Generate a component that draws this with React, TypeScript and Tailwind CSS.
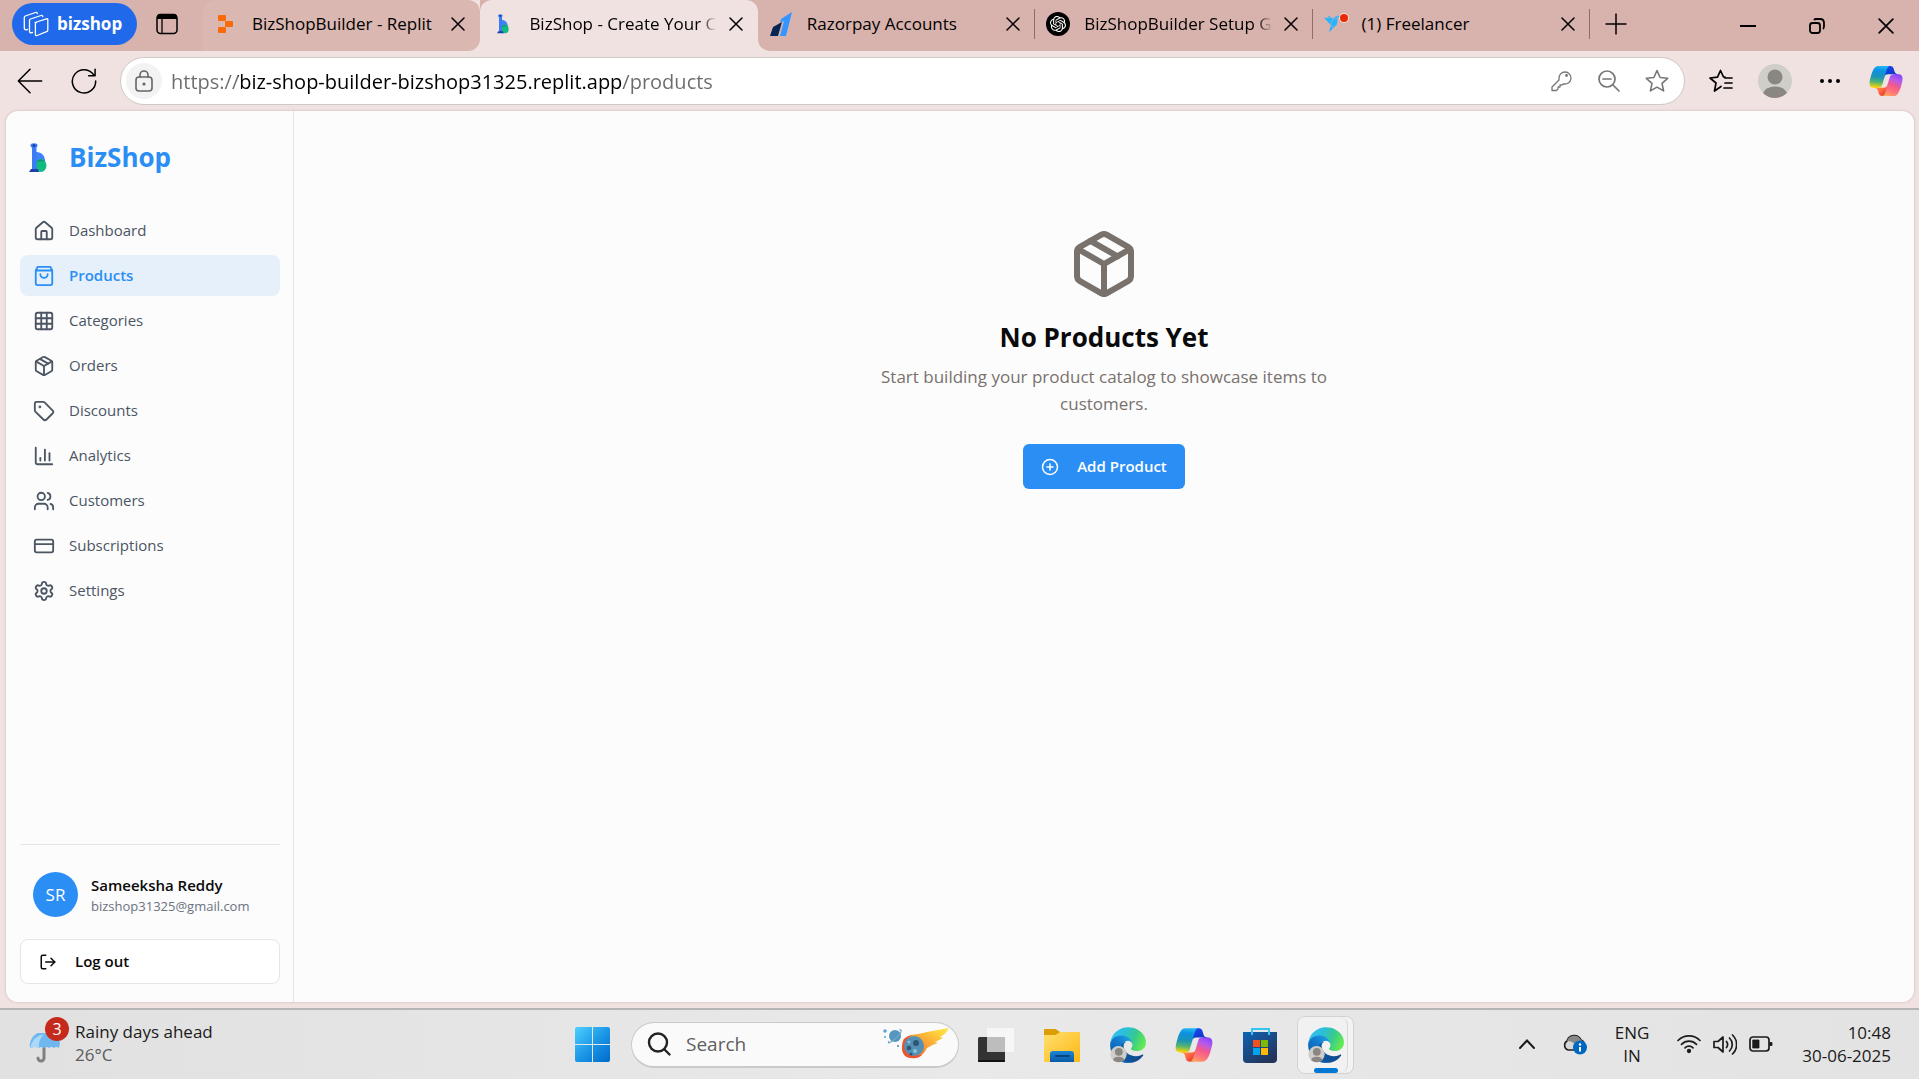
import { useId, useState } from "react";
import type { ReactNode } from "react";
import {
  ChartColumn,
  CirclePlus,
  CreditCard,
  Grid3x3,
  House,
  LogOut,
  Package,
  Settings,
  ShoppingBag,
  Tag,
  Users,
} from "lucide-react";
import { SiFreelancer, SiOpenai } from "react-icons/si";

/* ---------- Brand drawings ---------- */

function CopilotLogo({ className }: { className: string }) {
  const id = useId();
  return (
    <svg viewBox="0 0 48 48" className={className} aria-hidden="true">
      <defs>
        <linearGradient id={id + "a"} x1="0.2" y1="0" x2="0.7" y2="1">
          <stop offset="0" stopColor="#1b48ef" />
          <stop offset="1" stopColor="#0a2fb8" />
        </linearGradient>
        <linearGradient id={id + "b"} x1="0" y1="0" x2="1" y2="1">
          <stop offset="0" stopColor="#ffb657" />
          <stop offset="0.6" stopColor="#ff5f3d" />
          <stop offset="1" stopColor="#c02b3c" />
        </linearGradient>
        <linearGradient id={id + "c"} x1="0.5" y1="0" x2="0.4" y2="1">
          <stop offset="0" stopColor="#1fb6f4" />
          <stop offset="0.2" stopColor="#0d91e1" />
          <stop offset="0.5" stopColor="#1a93b8" />
          <stop offset="0.75" stopColor="#52b471" />
          <stop offset="1" stopColor="#ffd602" />
        </linearGradient>
        <linearGradient id={id + "d"} x1="0.7" y1="0" x2="0.3" y2="1">
          <stop offset="0" stopColor="#8c48ff" />
          <stop offset="0.25" stopColor="#b95be8" />
          <stop offset="0.5" stopColor="#f2598a" />
          <stop offset="0.8" stopColor="#ff7a78" />
          <stop offset="1" stopColor="#ffa45c" />
        </linearGradient>
      </defs>
      <path fill={`url(#${id}a)`} d="M34.14 7.33A4.63 4.63 0 0 0 29.7 4h-1.35a4.63 4.63 0 0 0-4.55 3.8l-2.32 12.6.58-1.96a4.63 4.63 0 0 1 4.44-3.33h7.85l3.3 1.28 3.17-1.28h-.93a4.63 4.63 0 0 1-4.44-3.33l-1.31-4.45Z" />
      <path fill={`url(#${id}b)`} d="M14.33 40.66A4.63 4.63 0 0 0 18.78 44h2.87a4.63 4.63 0 0 0 4.63-4.51l.31-12.16-.65 2.23a4.63 4.63 0 0 1-4.45 3.33h-7.92l-2.82-1.53-3.06 1.53h.91a4.63 4.63 0 0 1 4.45 3.34l1.28 4.43Z" />
      <path fill={`url(#${id}c)`} d="M29.5 4H13.46c-4.58 0-7.33 6.06-9.16 12.11-2.18 7.18-5.02 16.78 3.2 16.78h6.93a4.63 4.63 0 0 0 4.46-3.36c1.1-3.87 3.05-10.67 4.97-17.16.84-2.84 1.54-5.28 2.62-6.8C27.08 4.71 28.09 4 29.5 4Z" />
      <path fill={`url(#${id}d)`} d="M18.5 44h16.04c4.58 0 7.33-6.06 9.16-12.11 2.18-7.18 5.02-16.78-3.2-16.78h-6.93a4.63 4.63 0 0 0-4.46 3.36c-1.1 3.87-3.04 10.67-4.97 17.16-.84 2.84-1.54 5.28-2.62 6.8-.6.86-1.61 1.57-3.02 1.57Z" />
    </svg>
  );
}

function EdgeLogo({ className }: { className: string }) {
  const id = useId();
  return (
    <svg viewBox="4 4 257 256" className={className} aria-hidden="true">
      <defs>
        <linearGradient id={id + "a"} x1="0" y1="0.5" x2="1" y2="0.5">
          <stop offset="0" stopColor="#0c59a4" />
          <stop offset="1" stopColor="#114a8b" />
        </linearGradient>
        <linearGradient id={id + "b"} x1="0.9" y1="0.2" x2="0.3" y2="1">
          <stop offset="0" stopColor="#1b9de2" />
          <stop offset="0.4" stopColor="#1378cd" />
          <stop offset="1" stopColor="#0d5ba8" />
        </linearGradient>
        <linearGradient id={id + "c"} x1="0" y1="0.3" x2="1" y2="0.6">
          <stop offset="0" stopColor="#35c1f1" />
          <stop offset="0.35" stopColor="#2bbfdb" />
          <stop offset="0.65" stopColor="#36c98e" />
          <stop offset="1" stopColor="#66eb4e" />
        </linearGradient>
      </defs>
      <path fill={`url(#${id}a)`} d="M235.68 200.4a93.73 93.73 0 0 1-10.54 4.7 101.87 101.87 0 0 1-35.9 6.46c-47.32 0-88.54-32.55-88.54-74.32a31.48 31.48 0 0 1 16.43-27.2c-42.8 1.8-53.8 46.4-53.8 72.53 0 73.88 68.09 77 82.76 77 7.91 0 19.84-2.3 27-4.56l1.31-.44a128.34 128.34 0 0 0 66.6-48.5 4 4 0 0 0-5.32-5.68z" />
      <path fill={`url(#${id}b)`} d="M110.34 246.34A79.2 79.2 0 0 1 87.6 225a80.72 80.72 0 0 1 29.53-120c3.12-1.47 8.45-4.13 15.54-4a32.35 32.35 0 0 1 25.69 13 31.88 31.88 0 0 1 6.36 18.66c0-.21 24.46-79.6-80-79.6-43.9 0-80 41.66-80 78.21a130.15 130.15 0 0 0 12.11 56 128 128 0 0 0 156.38 67.11 75.55 75.55 0 0 1-62.78-8z" />
      <path fill={`url(#${id}c)`} d="M156.94 153.78c-.81 1.05-3.3 2.5-3.3 5.66 0 2.61 1.7 5.12 4.72 7.23 14.38 10 41.49 8.68 41.56 8.68a59.56 59.56 0 0 0 30.27-8.35 61.38 61.38 0 0 0 30.43-52.88c.26-22.41-8-37.31-11.34-43.91C228.09 28.76 182.35 4.92 132.61 4.92a128 128 0 0 0-128 126.2c.48-36.54 36.8-66.05 80-66.05 3.5 0 23.46.34 42 10.07 16.34 8.58 24.9 18.94 30.85 29.21 6.18 10.67 7.28 24.15 7.28 29.52s-2.74 13.33-7.8 19.91z" />
      <circle cx="65" cy="198" r="58" fill="#cfcdc9" />
      <circle cx="67" cy="181" r="28" fill="#8a8682" />
      <path fill="#8a8682" d="M26 239a41 30 0 0 1 80 0 58 58 0 0 1-80 0z" />
    </svg>
  );
}

function BizShopMark({ className }: { className: string }) {
  return (
    <svg viewBox="0 0 18 30" className={className} aria-hidden="true">
      <path d="M7 9c6 0 9 4 9 9s-3 11-9 11z" fill="#3f83f8" />
      <ellipse cx="12" cy="22.5" rx="5.5" ry="6.5" fill="#12b981" />
      <path d="M7 20c2-4 6-5 9-1-3-1-6-1-9 1z" fill="#0a9a6b" />
      <rect x="3" y="3" width="4.500" height="24" fill="#3b7bf6" />
      <ellipse cx="5" cy="2.500" rx="3.500" ry="2.300" fill="#3b7bf6" />
      <circle cx="5" cy="2.500" r="1.500" fill="#1e40af" />
      <path d="M2 26h7l1 3H0z" fill="#1e40af" />
    </svg>
  );
}

function ReplitMark() {
  return (
    <svg viewBox="0 0 18 20" className="h-[20px] w-[18px]" aria-hidden="true">
      <g fill="#f96a0a">
        <rect x="1" y="1" width="8" height="6" rx="1" />
        <rect x="8" y="7" width="8" height="6" rx="1" />
        <rect x="1" y="13" width="8" height="6" rx="1" />
      </g>
    </svg>
  );
}

function RazorpayMark() {
  return (
    <svg viewBox="0 0 22 24" className="h-6 w-[22px]" aria-hidden="true">
      <path d="M3 15l9-5-4 14H0z" fill="#072654" />
      <path d="M22 0l-6 24h-6l4-15-4 2 1-4z" fill="#3395ff" />
    </svg>
  );
}

function OpenAiMark() {
  return (
    <span className="flex size-6 items-center justify-center rounded-full bg-black text-white">
      <SiOpenai className="size-4" />
    </span>
  );
}

function FreelancerMark() {
  return (
    <span className="relative flex size-6 items-center">
      <SiFreelancer className="size-[22px] shrink-0 text-[#29b2fe]" />
      <span className="absolute top-[2px] right-0 size-2 rounded-full bg-[#eb2806] ring-1 ring-[#f6dcd8]" />
    </span>
  );
}

function WorkspaceMark() {
  return (
    <svg viewBox="0 0 26 26" className="size-[26px]" fill="none" stroke="currentColor" strokeWidth="1.300" strokeLinejoin="round" strokeLinecap="round" aria-hidden="true">
      <path d="M12 11.500l11.500-3.700q1.300-.4 1.300.9V19q0 1.300-1.200 1.700L14 24.500q-1.600.6-1.600-1V13q0-1.100 1-1.500" />
      <path d="M9.500 21.500l-1.500.3q-1.500 0-1.500-1.500V9.500q0-1.100 1-1.500L18 4.500q1.600-.5 1.800 1.200" />
      <path d="M4.500 18.500l-1.500.3Q1.300 18.800 1.300 17V6.500q0-1.100 1-1.500L12.500 1.500q1.600-.5 1.800 1" />
    </svg>
  );
}

/* ---------- Browser line icons ---------- */

function Line({ children, className, width = 1.3 }: { children: ReactNode; className: string; width?: number }) {
  return (
    <svg viewBox="0 0 24 24" className={className} fill="none" stroke="currentColor" strokeWidth={width} strokeLinecap="round" strokeLinejoin="round" aria-hidden="true">
      {children}
    </svg>
  );
}

function CloseGlyph({ className }: { className: string }) {
  return (
    <svg viewBox="0 0 14 14" className={className} stroke="currentColor" strokeWidth="1.500" strokeLinecap="round" aria-hidden="true">
      <path d="M1 1l12 12M13 1L1 13" />
    </svg>
  );
}

/* ---------- Tabs ---------- */

type BrowserTab = { title: string; icon: ReactNode; kind: "soft" | "active" | "next" | "plain"; divider?: boolean; fade?: boolean };

const tabs: BrowserTab[] = [
  { title: "BizShopBuilder - Replit", icon: <ReplitMark />, kind: "soft" },
  { title: "BizShop - Create Your C", icon: <BizShopMark className="h-5 w-3" />, kind: "active", fade: true },
  { title: "Razorpay Accounts", icon: <RazorpayMark />, kind: "next", divider: true },
  { title: "BizShopBuilder Setup G", icon: <OpenAiMark />, kind: "plain", divider: true, fade: true },
  { title: "(1) Freelancer", icon: <FreelancerMark />, kind: "plain", divider: true },
];

const tabStyles = {
  soft: "rounded-t-xl rounded-br-xl bg-[#dbb7b1]",
  active: "rounded-t-xl bg-[#f0e2e1]",
  next: "rounded-bl-xl bg-[#d8b2ac]",
  plain: "bg-[#d8b2ac]",
};

const tabCornerFill = {
  soft: "bg-linear-to-r from-[#d8b2ac] from-50% to-[#f0e2e1] to-50%",
  active: "bg-[#d8b2ac]",
  next: "bg-[#f0e2e1]",
  plain: "bg-[#d8b2ac]",
};

function TabStrip() {
  return (
    <header className="flex h-[51px] shrink-0 items-stretch bg-[#d8b2ac] text-black">
      <div className="flex w-[203px] shrink-0 items-center pl-3">
        <button className="mb-1 flex h-[42px] items-center gap-2 rounded-full bg-[#2169eb] pr-[15px] pl-[11px] text-[17px] font-bold text-white">
          <WorkspaceMark />
          bizshop
        </button>
        <button aria-label="Tab actions" className="mb-1 ml-[19px]">
          <svg viewBox="0 0 22 22" className="size-[22px]" aria-hidden="true">
            <rect x="1" y="1.500" width="20" height="19" rx="3.500" fill="none" stroke="#000" strokeWidth="1.500" />
            <path d="M1 6V4q0-3 3-3h14q3 0 3 3v2z" />
            <path d="M6 6v14" stroke="#000" strokeWidth="1.300" />
          </svg>
        </button>
      </div>
      <nav aria-label="Open tabs" className="grid min-w-0 flex-1 grid-cols-5">
        {tabs.map((tab) => (
          <div key={tab.title} className={`flex min-w-0 ${tabCornerFill[tab.kind]}`}>
            <div className={`flex min-w-0 flex-1 items-center pb-1 pl-[11px] ${tabStyles[tab.kind]}`}>
              <span className="flex w-6 shrink-0 justify-center">{tab.icon}</span>
              <span className={`ml-[14px] text-[17px] whitespace-nowrap ${tab.fade ? "mask-r-from-92%" : ""}`}>{tab.title}</span>
              <button aria-label={`Close ${tab.title}`} className="mr-[14px] ml-auto shrink-0">
                <CloseGlyph className="size-[14px]" />
              </button>
              <span className={tab.divider ? "h-[30px] w-px bg-[#8c6f6b]" : "h-[30px] w-px"} />
            </div>
          </div>
        ))}
      </nav>
      <div className="flex w-[329px] shrink-0 items-center pb-1 pl-[15px]">
        <button aria-label="New tab">
          <svg viewBox="0 0 22 22" className="size-[22px]" stroke="#000" strokeWidth="1.500" aria-hidden="true">
            <path d="M11 .5v21M.5 11h21" />
          </svg>
        </button>
        <div className="ml-auto flex items-center gap-[53px] pt-1 pr-[25px]">
          <button aria-label="Minimize">
            <svg viewBox="0 0 16 16" className="size-4" stroke="#000" strokeWidth="2" aria-hidden="true"><path d="M0 8h16" /></svg>
          </button>
          <button aria-label="Restore">
            <svg viewBox="0 0 16 16" className="size-4" fill="none" stroke="#000" strokeWidth="1.800" aria-hidden="true">
              <rect x="1" y="5" width="10" height="10" rx="2.500" />
              <path d="M5 2q.5-1 2.500-1H11q4 0 4 4v3q0 2-1 3" />
            </svg>
          </button>
          <button aria-label="Close window"><CloseGlyph className="size-4" /></button>
        </div>
      </div>
    </header>
  );
}

function Toolbar() {
  const [url, setUrl] = useState("https://biz-shop-builder-bizshop31325.replit.app/products");
  return (
    <div className="flex h-[60px] shrink-0 items-center pr-[15px] pl-4 text-black">
      <button aria-label="Back">
        <Line className="size-7"><path d="M22 12H2M12 2L2 12l10 10" /></Line>
      </button>
      <button aria-label="Refresh" className="ml-[26px]">
        <Line className="size-7"><path d="M20.500 7A10 10 0 1 0 22 12M21.500 2v5.500H16" /></Line>
      </button>
      <div className="ml-[22px] flex h-12 min-w-0 flex-1 items-center rounded-full border border-[#cfc9c8] bg-white pr-[15px] pl-[5px] text-[#767676]">
        <button aria-label="Site information" className="flex size-9 items-center justify-center rounded-full bg-[#f3f3f3] text-[#666]">
          <Line className="size-6" width={1.6}>
            <rect x="4" y="8" width="16" height="14" rx="3" />
            <path d="M8 8V6a4 4 0 0 1 8 0v2" />
            <circle cx="12" cy="15" r=".8" fill="currentColor" />
          </Line>
        </button>
        <input
          aria-label="Address"
          value={url}
          onChange={(event) => setUrl(event.target.value)}
          className="ml-[9px] h-10 min-w-0 flex-1 bg-[linear-gradient(90deg,#6b6b6b_67px,#000_67px,#000_451px,#6b6b6b_451px)] bg-clip-text text-[20px] text-transparent caret-black outline-none"
        />
        <div className="flex items-center gap-6">
          <button aria-label="Saved passwords">
            <Line className="size-6">
              <path d="M10 9.500a6 6 0 1 1 4.500 5.300L13 16h-2v2H9v2l-1.500 1.500H3V18l7-7z" />
              <circle cx="17.500" cy="6.500" r=".8" fill="currentColor" />
            </Line>
          </button>
          <button aria-label="Zoom">
            <Line className="size-6" width={1.7}><circle cx="10" cy="10" r="8" /><path d="M6 10h8M16 16l6 6" /></Line>
          </button>
          <button aria-label="Add to favorites">
            <Line className="size-6" width={1.6}><path d="M12 1.500l3.100 7 7.600.8-5.700 5.100 1.600 7.500L12 18.100l-6.600 3.800L7 14.400 1.300 9.300l7.600-.8z" /></Line>
          </button>
        </div>
      </div>
      <button aria-label="Favorites" className="ml-6">
        <Line className="size-6" width={1.7}>
          <path d="M12 17.500l-6.500 4.500 1.500-8L1 9l7.500-.8L11.500 1.500l3 6.500H16M16 9h7M16 14h7M15 19h8" />
        </Line>
      </button>
      <button aria-label="Profile" className="ml-[25px]">
        <svg viewBox="0 0 34 34" className="size-[34px]" aria-hidden="true">
          <circle cx="17" cy="17" r="17" fill="#d0cec9" />
          <circle cx="17" cy="13" r="7.500" fill="#8a8682" />
          <path d="M5 29q3-6.500 12-6.500T29 29q-5 5-12 5T5 29z" fill="#8a8682" />
        </svg>
      </button>
      <button aria-label="Settings and more" className="ml-[27px]">
        <svg viewBox="0 0 22 6" className="h-[6px] w-[22px]" aria-hidden="true">
          <circle cx="3" cy="3" r="2" /><circle cx="11" cy="3" r="2" /><circle cx="19" cy="3" r="2" />
        </svg>
      </button>
      <button aria-label="Copilot" className="ml-[27px]"><CopilotLogo className="size-9" /></button>
    </div>
  );
}

/* ---------- BizShop page ---------- */

const navItems = [
  { label: "Dashboard", Icon: House },
  { label: "Products", Icon: ShoppingBag },
  { label: "Categories", Icon: Grid3x3 },
  { label: "Orders", Icon: Package },
  { label: "Discounts", Icon: Tag },
  { label: "Analytics", Icon: ChartColumn },
  { label: "Customers", Icon: Users },
  { label: "Subscriptions", Icon: CreditCard },
  { label: "Settings", Icon: Settings },
];

function BagIcon() {
  return (
    <svg viewBox="0 0 24 24" className="size-[22px]" fill="none" stroke="currentColor" strokeWidth="2" strokeLinecap="round" strokeLinejoin="round" aria-hidden="true">
      <path d="M3 6l2-4h14l2 4v14a2 2 0 0 1-2 2H5a2 2 0 0 1-2-2zM3 6h18M16 10a4 4 0 0 1-8 0" />
    </svg>
  );
}

function Sidebar() {
  return (
    <aside className="flex w-72 shrink-0 flex-col border-r border-[#e5e5e5] pr-[13px] pb-[18px] pl-[14px]">
      <div className="flex h-[99px] items-center pb-[6px] pl-[9px]">
        <BizShopMark className="h-[30px] w-[18px]" />
        <span className="ml-[22px] text-[26px] font-bold text-[#2b8ef5]">BizShop</span>
      </div>
      <nav aria-label="Store" className="flex flex-col gap-1">
        {navItems.map(({ label, Icon }) => {
          const active = label === "Products";
          return (
            <a
              key={label}
              href="#"
              aria-current={active ? "page" : undefined}
              className={`flex h-[41px] items-center gap-[14px] rounded-lg px-[13px] text-[15px] ${active ? "bg-[#e5f0fb] font-semibold text-[#2b8ef5]" : "text-[#4b5563]"}`}
            >
              {active ? <BagIcon /> : <Icon className="size-[22px]" />}
              {label}
            </a>
          );
        })}
      </nav>
      <div className="mt-auto border-t border-[#e5e5e5] pt-[27px]">
        <div className="flex items-center gap-[13px] pl-[13px]">
          <span className="flex size-[45px] items-center justify-center rounded-full bg-[#2b8ef5] text-[17px] text-white">SR</span>
          <div>
            <p className="text-[15px] leading-[22px] font-semibold text-[#0a0a0a]">Sameeksha Reddy</p>
            <p className="text-[13px] leading-5 text-[#6b7280]">bizshop31325@gmail.com</p>
          </div>
        </div>
        <button className="mt-[22px] flex h-[45px] w-full items-center gap-[18px] rounded-lg border border-[#e5e5e5] bg-white px-[18px] text-[15px] font-semibold text-[#0a0a0a]">
          <LogOut className="size-[18px]" />
          Log out
        </button>
      </div>
    </aside>
  );
}

function ProductsPage() {
  return (
    <main className="flex min-w-0 flex-1 flex-col items-center pt-[117px] text-center">
      <Package className="size-[72px] text-[#78716c]" />
      <h1 className="mt-[19px] text-[26px] leading-9 font-bold text-[#0a0a0a]">No Products Yet</h1>
      <p className="mt-2 max-w-[504px] text-[17px] leading-[27px] text-[#78716c]">
        Start building your product catalog to showcase items to customers.
      </p>
      <button className="mt-[27px] flex h-[45px] items-center gap-[18px] rounded-md bg-[#2b8ef5] px-[18px] text-[15px] font-semibold text-white">
        <CirclePlus className="size-[18px]" />
        Add Product
      </button>
    </main>
  );
}

/* ---------- Taskbar ---------- */

function Weather() {
  return (
    <button className="flex items-center gap-[6px] pb-[3px] pl-[29px] text-left">
      <span className="relative flex size-10 items-end">
        <svg viewBox="0 0 32 30" className="h-[30px] w-8" aria-hidden="true">
          <path d="M15 14v11a3 3 0 0 1-6 0" fill="none" stroke="#808080" strokeWidth="3" strokeLinecap="round" />
          <path d="M1 15A15 14 0 0 1 31 10l-1 5q-3-2-5 0-3-2-5 0-3-2-5 0-3-2-5 0-4-2-9 0z" fill="#70b7f0" />
          <path d="M1 15Q4 3 15 1q-6 6-5 14-4-2-9 0z" fill="#a9d8f8" />
        </svg>
        <span className="absolute -top-[6px] left-4 flex size-6 items-center justify-center rounded-full bg-[#c42b1c] text-[16px] text-white">3</span>
      </span>
      <span className="text-[17px] leading-[23px]">
        <span className="block text-[#1b1b1b]">Rainy days ahead</span>
        <span className="block text-[#5c5c5c]">26°C</span>
      </span>
    </button>
  );
}

function StartLogo() {
  return (
    <svg viewBox="0 0 35 35" className="size-[35px]" aria-hidden="true">
      <defs>
        <linearGradient id="start-fill" gradientUnits="userSpaceOnUse" x1="0" y1="0" x2="35" y2="35">
          <stop offset="0" stopColor="#4fd0ff" />
          <stop offset="0.5" stopColor="#1c98e6" />
          <stop offset="1" stopColor="#0069cc" />
        </linearGradient>
      </defs>
      <g fill="url(#start-fill)">
        <path d="M2 0h15v17H0V2q0-2 2-2z" />
        <path d="M18 0h15q2 0 2 2v15H18z" />
        <path d="M0 18h17v17H2q-2 0-2-2z" />
        <path d="M18 18h17v15q0 2-2 2H18z" />
      </g>
    </svg>
  );
}

function CometArt() {
  return (
    <svg viewBox="0 0 68 32" className="h-8 w-[68px] shrink-0" aria-hidden="true">
      <defs>
        <linearGradient id="comet-tail" x1="0" y1="1" x2="1" y2="0">
          <stop offset="0" stopColor="#ee4f2f" />
          <stop offset="0.4" stopColor="#f79433" />
          <stop offset="0.8" stopColor="#ffd23d" />
          <stop offset="1" stopColor="#ffe94a" />
        </linearGradient>
      </defs>
      <circle cx="3" cy="3" r="1.800" fill="#5aa9d8" />
      <circle cx="3" cy="9" r="1" fill="#5aa9d8" />
      <circle cx="16" cy="18" r="1" fill="#4b7f9f" />
      <circle cx="13" cy="8" r="6" fill="#5496bd" />
      <path d="M7 13q-2 3 2 1 5-3 9-8 3-5-1-4" fill="none" stroke="#77a9c6" strokeWidth="1.200" />
      <path d="M20 19q1-9 9-12 9-1 16-3 10-2 22-4-3 6-9 9l3 1-8 4 3 1q-7 2-11 5-4 8-11 10-14 2-14-11z" fill="url(#comet-tail)" />
      <path d="M30 7Q20 8 20 19t12 11q5 0 8-3-14 2-17-6-2-9 7-14z" fill="#f1512d" />
      <circle cx="32" cy="18" r="10" fill="#5490b5" />
      <circle cx="34" cy="15" r="3" fill="#2e5777" />
      <circle cx="27" cy="20" r="2.300" fill="#2e5777" />
      <circle cx="33" cy="23" r="2" fill="#86c4de" />
      <circle cx="27" cy="14" r="1.500" fill="#86c4de" />
      <circle cx="29" cy="26" r="1.500" fill="#2e5777" />
    </svg>
  );
}

function TaskViewIcon() {
  return (
    <svg viewBox="0 0 36 34" className="h-[34px] w-9" aria-hidden="true">
      <rect x="0" y="9" width="27" height="25" rx="1.500" fill="#333" />
      <rect x="9" y="0" width="27" height="24" rx="1" fill="#f6f6f6" />
      <path d="M9 9h18v15H9z" fill="#bdbdbd" />
      <path d="M0 32h27v1q0 1-1 1H1q-1 0-1-1z" fill="#111" />
    </svg>
  );
}

function FolderIcon() {
  return (
    <svg viewBox="0 0 36 34" className="h-[34px] w-9" aria-hidden="true">
      <defs>
        <linearGradient id="folder-fill" x1="0" y1="0" x2="1" y2="1">
          <stop offset="0" stopColor="#ffdf70" />
          <stop offset="1" stopColor="#fdb813" />
        </linearGradient>
        <linearGradient id="folder-tray" x1="0" y1="0" x2="0" y2="1">
          <stop offset="0" stopColor="#1a86d8" />
          <stop offset="1" stopColor="#0a5ba6" />
        </linearGradient>
      </defs>
      <path d="M0 2q0-1 1-1h10q1 0 2 1l3 2v8H0z" fill="#dd9d05" />
      <path d="M0 7h11q1 0 2-1l3-2h19q1 0 1 1v28q0 1-1 1H1q-1 0-1-1z" fill="url(#folder-fill)" />
      <path d="M6 34v-8q0-3 3-3h18q3 0 3 3v8z" fill="url(#folder-tray)" />
      <path d="M12 28h13" stroke="#0b457c" strokeWidth="2" strokeLinecap="round" />
    </svg>
  );
}

function StoreIcon() {
  return (
    <svg viewBox="0 0 36 36" className="size-9" aria-hidden="true">
      <defs>
        <linearGradient id="store-fill" x1="0" y1="0" x2="0.7" y2="1">
          <stop offset="0" stopColor="#0e63b5" />
          <stop offset="1" stopColor="#243459" />
        </linearGradient>
      </defs>
      <path d="M1 5h34v27q0 4-4 4H5q-4 0-4-4z" fill="url(#store-fill)" />
      <path d="M10 8V2h17v6" fill="none" stroke="#35c5f3" strokeWidth="2" />
      <path d="M11 13h7v7h-7z" fill="#f25022" />
      <path d="M19 13h7v7h-7z" fill="#7fba00" />
      <path d="M11 21h7v7h-7z" fill="#00a4ef" />
      <path d="M19 21h7v7h-7z" fill="#ffb900" />
    </svg>
  );
}

function Taskbar() {
  return (
    <footer className="grid h-[71px] shrink-0 grid-cols-[1fr_auto_1fr] items-center border-t-2 border-[#b5b5b5] bg-linear-to-r from-[#e1e1e1] via-[#e9e9e9] to-[#e3e3e3]">
      <Weather />
      <div className="flex items-center pl-[15px]">
        <button aria-label="Start"><StartLogo /></button>
        <label className="mr-1 ml-[21px] flex h-[46px] w-[328px] items-center rounded-full border border-b-2 border-[#cacaca] bg-[#fafafa] pr-2 pl-[15px]">
          <svg viewBox="0 0 24 24" className="size-6 shrink-0" fill="none" stroke="#222" strokeWidth="2.400" strokeLinecap="round" aria-hidden="true">
            <circle cx="11" cy="10.500" r="9" />
            <path d="M17.500 17.500l5 5" />
          </svg>
          <input aria-label="Search" placeholder="Search" className="ml-[15px] min-w-0 flex-1 text-[19px] outline-none placeholder:text-[#5f5f5f]" />
          <CometArt />
        </label>
        <button aria-label="Task view" className="flex w-[66px] justify-center"><TaskViewIcon /></button>
        <button aria-label="File Explorer" className="flex w-[66px] justify-center"><FolderIcon /></button>
        <button aria-label="Microsoft Edge" className="flex w-[66px] justify-center"><EdgeLogo className="size-9" /></button>
        <button aria-label="Copilot" className="flex w-[66px] justify-center"><CopilotLogo className="size-10" /></button>
        <button aria-label="Microsoft Store" className="flex w-[66px] justify-center"><StoreIcon /></button>
        <button aria-label="Microsoft Edge, running" className="flex w-[66px] pl-1">
          <span className="rounded-lg border border-[#d2d2d2] bg-[#f3f3f3] pr-[5px]">
            <span className="relative flex h-[56px] w-[50px] items-center justify-center rounded-lg border-r border-[#d6d6d6] bg-[#f1f1f1] pl-[6px]">
              <EdgeLogo className="size-9" />
              <span className="absolute bottom-0 h-[5px] w-6 rounded-full bg-[#0078d4]" />
            </span>
          </span>
        </button>
      </div>
      <div className="flex items-center justify-end pr-7 pb-[2px] text-[17px] leading-[23px] text-[#1b1b1b]">
        <button aria-label="Show hidden icons">
          <svg viewBox="0 0 18 18" className="size-[18px]" fill="none" stroke="currentColor" strokeWidth="2" strokeLinecap="round" aria-hidden="true"><path d="M2 13l7-7.500L16 13" /></svg>
        </button>
        <button aria-label="OneDrive" className="ml-[26px]">
          <svg viewBox="0 0 26 22" className="h-[22px] w-[26px]" aria-hidden="true">
            <path d="M6 17a5 5 0 0 1-1-9 7.500 7.500 0 0 1 14-1q3 1 3 4l-8 6z" fill="#d8d8d8" stroke="#222" strokeWidth="1.600" />
            <path d="M5 8a7.500 7.500 0 0 1 14-1q3 1 3 4-9 1-12-2-2-1-5-1z" fill="#888" />
            <circle cx="18" cy="14.500" r="7" fill="#0067c0" />
            <circle cx="18" cy="11.500" r="1.200" fill="#fff" />
            <path d="M18 14v4.500" stroke="#fff" strokeWidth="2" />
          </svg>
        </button>
        <button aria-label="Input language" className="ml-[27px] text-center">
          <span className="block">ENG</span>
          <span className="block">IN</span>
        </button>
        <button aria-label="Network, volume and battery" className="ml-[28px] flex items-center gap-3">
          <Line className="size-6" width={1.7}>
            <path d="M1 8.500a15.500 15.500 0 0 1 22 0M4.500 12.300a10.500 10.500 0 0 1 15 0M8 15.800a5.700 5.700 0 0 1 8 0" />
            <circle cx="12" cy="19" r="1.300" fill="currentColor" />
          </Line>
          <Line className="size-6" width={1.7}>
            <path d="M1 9.500h4l5-4.500v15l-5-4.500H1zM13.500 9.500a5 5 0 0 1 0 6M16.500 6a9 9 0 0 1 0 13M19.500 3a13 13 0 0 1 0 19" />
          </Line>
          <Line className="size-6" width={1.7}>
            <rect x="1" y="5" width="19" height="14" rx="3" />
            <path d="M4 8h6v8H4zM21 10.500h2v3h-2z" fill="currentColor" strokeWidth={0.8} />
          </Line>
        </button>
        <button aria-label="Date and time" className="ml-[29px] text-right">
          <time className="block">10:48</time>
          <time className="block">30-06-2025</time>
        </button>
      </div>
    </footer>
  );
}

export default function App() {
  return (
    <div className="flex h-screen min-w-[1200px] flex-col overflow-hidden bg-[#f0e2e1] font-['Open_Sans',sans-serif]">
      <TabStrip />
      <Toolbar />
      <div className="mr-[5px] mb-[6px] ml-[6px] flex min-h-0 flex-1 rounded-xl bg-[#fcfcfc] shadow-[0_0_2px_1px_#dfcccb]">
        <Sidebar />
        <ProductsPage />
      </div>
      <Taskbar />
    </div>
  );
}
